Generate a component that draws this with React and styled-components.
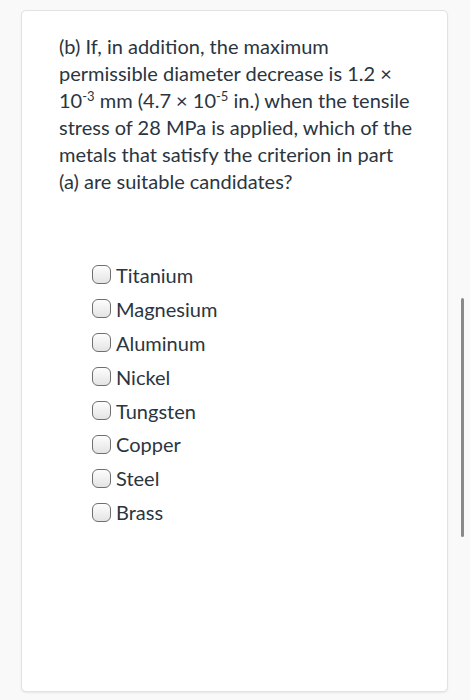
import React from 'react';
import styled, { createGlobalStyle } from 'styled-components';

const GlobalStyle = createGlobalStyle`
  html, body {
    margin: 0;
    padding: 0;
    background: #f9f9f9;
  }
  body {
    font-family: Lato, "Noto Sans", sans-serif;
    color: #2b3540;
  }
`;

const metals = ['Titanium', 'Magnesium', 'Aluminum', 'Nickel', 'Tungsten', 'Copper', 'Steel', 'Brass'];

const Page = styled.div`
  min-height: 700px;
  padding: 10px 22px 8px 21px;
  box-sizing: border-box;
`;

const Card = styled.div`
  width: 427px;
  height: 682px;
  box-sizing: border-box;
  background: #fff;
  border: 1px solid #e2e2e2;
  border-radius: 5px;
  box-shadow: 0 1px 2px rgba(0, 0, 0, 0.08);
  padding: 22px 20px 0 37px;
`;

const Question = styled.p`
  margin: 0;
  width: 356px;
  font-size: 20px;
  line-height: 27px;
  letter-spacing: 0;
`;

const Sup = styled.sup`
  font-size: 13px;
  line-height: 0;
  vertical-align: 7px;
`;

const Options = styled.ul`
  list-style: none;
  margin: 63px 0 0 33px;
  padding: 0;
  display: flex;
  flex-direction: column;
`;

const Option = styled.li`
  display: flex;
  align-items: center;
  gap: 5px;
  height: 33.9px;
  font-size: 20px;
`;

const Box = styled.span`
  width: 17px;
  height: 17px;
  border: 1.5px solid #6f6f6f;
  border-radius: 6px;
  background: linear-gradient(#fdfdfd, #e4e4e4);
  flex: none;
`;

const ScrollThumb = styled.div`
  position: fixed;
  top: 298px;
  left: 461px;
  width: 3px;
  height: 239px;
  border-radius: 2px;
  background: #8a8a8a;
`;

export default function App() {
  return (
    <>
      <GlobalStyle />
      <Page>
        <Card>
          <Question>
            (b) If, in addition, the maximum<br />
            permissible diameter decrease is 1.2 ×<br />
            10<Sup>-3</Sup> mm (4.7 × 10<Sup>-5</Sup> in.) when the tensile<br />
            stress of 28 MPa is applied, which of the<br />
            metals that satisfy the criterion in part<br />
            (a) are suitable candidates?
          </Question>
          <Options>
            {metals.map((m) => (
              <Option key={m}>
                <Box />
                {m}
              </Option>
            ))}
          </Options>
        </Card>
      </Page>
      <ScrollThumb />
    </>
  );
}
